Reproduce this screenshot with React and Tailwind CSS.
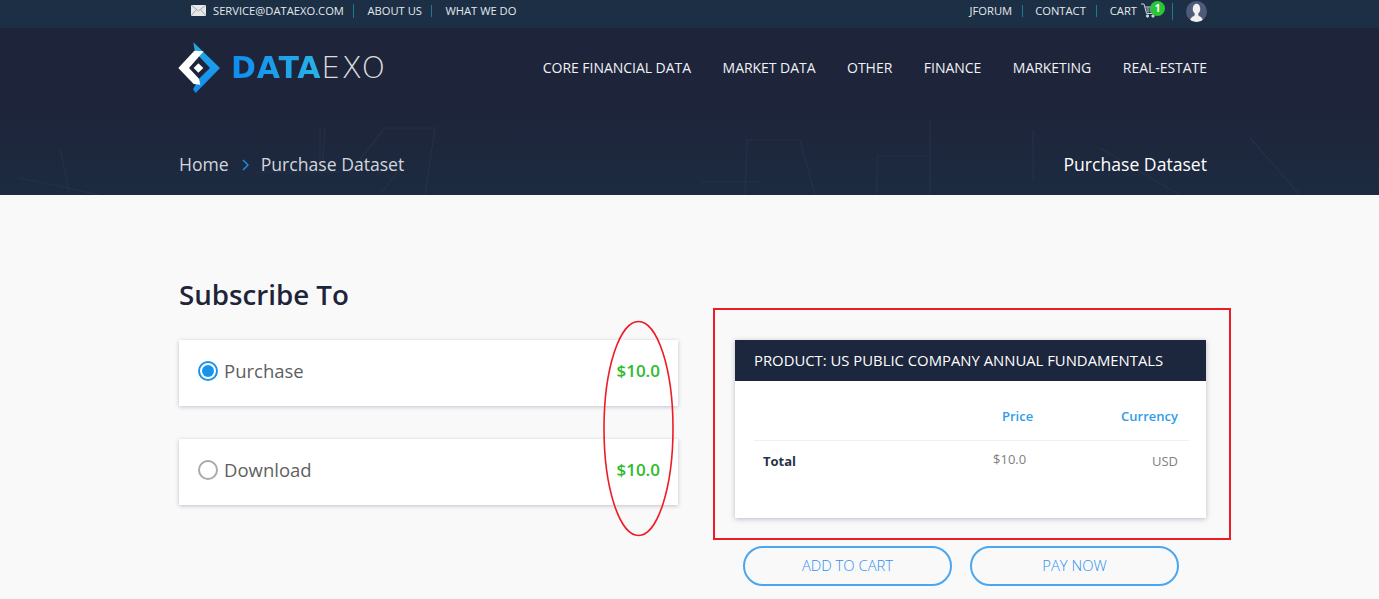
import React from "react";

const F = { fontFamily: '"Open Sans", "Noto Sans", sans-serif' };

function Sep({ h = "h-[14px]" }) {
  return <span className={`block w-px ${h} bg-[#1b7c90]`} />;
}

function Logo() {
  return (
    <div className="flex items-center mt-[2px]">
      <svg width="60" height="60" viewBox="0 0 180 180" className="block -ml-[4px]">
        <defs>
          <linearGradient id="lb" x1="0" y1="0" x2="0" y2="1">
            <stop offset="0" stopColor="#27a9e6" />
            <stop offset="1" stopColor="#0f8cf0" />
          </linearGradient>
        </defs>
        <path d="M55 13 L135 90 L62 165 L54 154 L72 122 L105 90 L60 42 Z" fill="url(#lb)" />
        <path d="M10 90 L58 38 L86 40 L42 90 L72 122 L76 140 L56 138 Z" fill="#ffffff" />
        <path d="M70 76 L85 90 L70 104 L56 90 Z" fill="#ffffff" />
      </svg>
      <div
        className="ml-[-4px] text-[30px] leading-none font-bold"
        style={{ fontFamily: '"DejaVu Sans", "Liberation Sans", sans-serif' }}
      >
        <span className="tracking-[0.8px] bg-gradient-to-r from-[#0f8cf0] to-[#2ab2e6] bg-clip-text text-transparent">DATA</span>
        <span className="tracking-[1.3px] font-extralight text-[#dcdcdc]">EXO</span>
      </div>
    </div>
  );
}

function Option({ label, checked }) {
  return (
    <div className="h-[66px] bg-white shadow-[0_1px_4px_rgba(90,90,130,0.35)] flex items-center pl-[19px] pr-[18px] pb-[4px]">
      {checked ? (
        <span className="w-[20px] h-[20px] rounded-full border-2 border-[#1a94ea] flex items-center justify-center">
          <span className="w-[12px] h-[12px] rounded-full bg-[#1a94ea]" />
        </span>
      ) : (
        <span className="w-[20px] h-[20px] rounded-full border-2 border-[#aaaaaa]" />
      )}
      <span className="ml-[6px] text-[18.5px] text-[#5f5f5f]">{label}</span>
      <span className="ml-auto text-[17px] font-semibold text-[#2dbb2d]">$10.0</span>
    </div>
  );
}

export default function App() {
  return (
    <div className="relative w-[1379px] h-[599px] overflow-hidden bg-[#f9f9f9]" style={F}>
      <div className="h-[28px] bg-[#1c2f45] text-[11.2px] text-[#e4e8ec]">
        <div className="ml-[191px] w-[1016px] h-full pb-[6px] flex items-center justify-between">
          <div className="flex items-center">
            <svg width="15" height="11" viewBox="0 0 15 11" className="mr-[7px]">
              <rect width="15" height="11" fill="#e8e8e8" />
              <path d="M0 0 L7.5 6 L15 0 M0 11 L5.5 4.5 M15 11 L9.5 4.5" stroke="#8d97a3" strokeWidth="0.8" fill="none" />
            </svg>
            <span>SERVICE@DATAEXO.COM</span>
            <span className="ml-[9.5px] mr-[13px]"><Sep /></span>
            <span>ABOUT US</span>
            <span className="ml-[9.5px] mr-[13px]"><Sep h="h-[12px]" /></span>
            <span>WHAT WE DO</span>
          </div>
          <div className="flex items-center">
            <span>JFORUM</span>
            <span className="ml-[10px] mr-[12px]"><Sep h="h-[12px]" /></span>
            <span>CONTACT</span>
            <span className="ml-[10px] mr-[13px]"><Sep h="h-[12px]" /></span>
            <span>CART</span>
            <span className="relative ml-[4px] w-[24px] h-[16px]">
              <svg width="15" height="15" viewBox="0 0 15 15" fill="none" stroke="#c9d1d8" strokeWidth="1">
                <path d="M0 1 H3 L5.5 10.5 H13 L14.5 4 H4" />
                <path d="M4.5 6 H14 M5 8 H13.5 M7 4 V10 M10 4 V10" strokeWidth="0.6" />
                <circle cx="6.5" cy="13" r="1.2" fill="#c9d1d8" />
                <circle cx="12" cy="13" r="1.2" fill="#c9d1d8" />
              </svg>
              <span className="absolute left-[9px] -top-[2px] w-[15px] h-[15px] rounded-full bg-[#2cc53a] text-white text-[10px] font-bold leading-[15px] text-center">1</span>
            </span>
            <span className="ml-[7px]"><Sep h="h-[17px]" /></span>
            <span className="ml-[13px] w-[21px] h-[21px] rounded-full bg-[#4f5a7a] overflow-hidden flex">
              <svg width="21" height="21" viewBox="0 0 20 20">
                <ellipse cx="10" cy="7.5" rx="3.6" ry="4.8" fill="#f0f0f0" />
                <path d="M8.5 11 L11.5 11 L12 14 C14 15 16 16 16.5 20 L3.5 20 C4 16 6 15 8 14 Z" fill="#f0f0f0" />
              </svg>
            </span>
          </div>
        </div>
      </div>

      <div className="relative h-[167px] bg-gradient-to-b from-[#1e243a] from-45% to-[#1c2b40] overflow-hidden">
        <svg className="absolute left-0 top-0" width="1379" height="167" fill="none" stroke="#29344a" strokeWidth="1.2" opacity="0.7">
          <path d="M255 144 H350 L385 100 H435 L425 167" />
          <path d="M320 100 V144 M325 100 L322 144 M350 144 L385 100" />
          <path d="M60 120 L70 167 M20 150 L100 167 M400 140 L380 167" />
          <path d="M747 112 H800 L815 167 M747 112 L745 167 M700 154 H760 M877 128 H930 M877 128 V167 M930 92 V167 M1033 102 V152" />
          <path d="M1100 120 L1180 167 M1250 110 L1300 167" />
        </svg>
        <div className="relative ml-[179px] w-[1028px] h-full flex flex-col">
          <div className="h-[78px] flex items-center justify-between">
            <Logo />
            <nav className="flex items-center gap-[31.6px] text-[14px] tracking-[-0.04px] text-[#f1f2f4]">
              <span>CORE FINANCIAL DATA</span>
              <span>MARKET DATA</span>
              <span>OTHER</span>
              <span>FINANCE</span>
              <span>MARKETING</span>
              <span>REAL-ESTATE</span>
            </nav>
          </div>
          <div className="mt-[45px] flex items-center justify-between text-[17.6px] leading-[26px]">
            <div className="flex items-center text-[#d3d6dc]">
              <span>Home</span>
              <svg width="7" height="12" viewBox="0 0 7 12" fill="none" stroke="#1a94ea" strokeWidth="1.4" className="ml-[13px] mr-[12px] mt-[1px]">
                <path d="M1 1 L6 6 L1 11" />
              </svg>
              <span>Purchase Dataset</span>
            </div>
            <span className="text-white">Purchase Dataset</span>
          </div>
        </div>
      </div>

      <div className="ml-[179px] flex">
        <div className="w-[499px]">
          <h1 className="mt-[80px] text-[27.7px] leading-[38px] font-semibold text-[#1e2539]">Subscribe To</h1>
          <div className="mt-[27px] flex flex-col gap-[33px]">
            <Option label="Purchase" checked />
            <Option label="Download" />
          </div>
        </div>
        <div className="ml-[57px] w-[471px] pt-[145px]">
          <div className="h-[178px] bg-white shadow-[0_1px_5px_rgba(90,90,130,0.4)]">
            <div className="h-[41px] bg-[#1c263d] flex items-center pl-[19px] text-[14.85px] text-white">
              PRODUCT: US PUBLIC COMPANY ANNUAL FUNDAMENTALS
            </div>
            <div className="mx-[19px] mr-[17px]">
              <div className="h-[60px] border-b border-[#f0f0f0] flex items-center text-[13px] font-semibold text-[#2f9bea] pt-[12px]">
                <span className="ml-[248px]">Price</span>
                <span className="ml-auto mr-[11px]">Currency</span>
              </div>
              <div className="h-[42px] flex items-center text-[13px]">
                <span className="ml-[9px] font-bold text-[#263147]">Total</span>
                <span className="ml-[197px] -mt-[4px] text-[#808080]">$10.0</span>
                <span className="ml-auto mr-[11px] text-[#808080]">USD</span>
              </div>
            </div>
          </div>
          <div className="mt-[28px] ml-[8px] flex gap-[18px]">
            <button className="w-[209px] h-[40px] pb-[2px] rounded-full border-2 border-[#4ba6ee] text-[14.8px] font-light text-[#2f8ff0]">ADD TO CART</button>
            <button className="w-[209px] h-[40px] pb-[2px] rounded-full border-2 border-[#4ba6ee] text-[14.8px] font-light text-[#2f8ff0]">PAY NOW</button>
          </div>
        </div>
      </div>

      <div className="absolute left-[713px] top-[308px] w-[518px] h-[232px] border-2 border-[#ee1c25]" />
      <svg className="absolute left-[602px] top-[320px]" width="72" height="217" fill="none">
        <ellipse cx="36.5" cy="108.5" rx="34.5" ry="107" stroke="#ee1c25" strokeWidth="1.6" />
      </svg>
    </div>
  );
}
